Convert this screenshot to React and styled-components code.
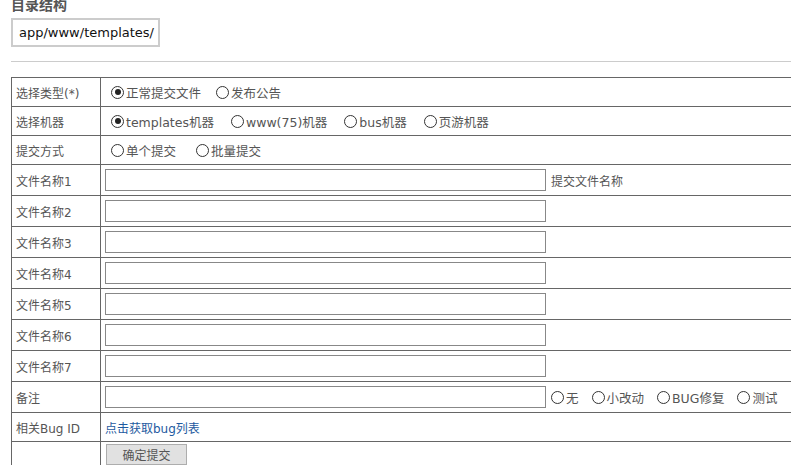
import React, { useState } from 'react';
import styled, { createGlobalStyle } from 'styled-components';

const GlobalStyle = createGlobalStyle`
    html, body {
        margin: 0;
        padding: 0;
        overflow: hidden;
        background: #fff;
    }
    body {
        font-family: "DejaVu Sans", "Noto Sans CJK SC", sans-serif;
        font-size: 12px;
        color: #444;
    }
`;

const fileRows = [1, 2, 3, 4, 5, 6, 7];

const Radio = ({ checked, label, onSelect }) => (
    <Option onClick={onSelect}>
        <Circle checked={checked} />
        <span>{label}</span>
    </Option>
);

const RadioGroup = ({ options, value, onChange, gap, indent }) => (
    <Group gap={gap} indent={indent}>
        {options.map(opt => (
            <Radio key={opt} label={opt} checked={value === opt} onSelect={() => onChange(opt)} />
        ))}
    </Group>
);

const App = () => {
    const [type, setType] = useState('正常提交文件');
    const [machine, setMachine] = useState('templates机器');
    const [mode, setMode] = useState('');
    const [note, setNote] = useState('');

    return(
        <Page>
            <GlobalStyle />
            <Title>目录结构</Title>
            <DirBox>app/www/templates/</DirBox>
            <Divider />
            <Table>
                <tbody>
                    <Row>
                        <Label>选择类型(*)</Label>
                        <Cell>
                            <RadioGroup options={['正常提交文件', '发布公告']} value={type} onChange={setType} gap={15} indent={6} />
                        </Cell>
                    </Row>
                    <Row>
                        <Label>选择机器</Label>
                        <Cell>
                            <RadioGroup options={['templates机器', 'www(75)机器', 'bus机器', '页游机器']} value={machine} onChange={setMachine} gap={17} indent={6} />
                        </Cell>
                    </Row>
                    <Row>
                        <Label>提交方式</Label>
                        <Cell>
                            <RadioGroup options={['单个提交', '批量提交']} value={mode} onChange={setMode} gap={20} indent={6} />
                        </Cell>
                    </Row>
                    {fileRows.map(n => (
                        <Row key={n} tall>
                            <Label>文件名称{n}</Label>
                            <Cell>
                                <Line>
                                    <TextInput />
                                    {n === 1 && <Hint>提交文件名称</Hint>}
                                </Line>
                            </Cell>
                        </Row>
                    ))}
                    <Row tall>
                        <Label>备注</Label>
                        <Cell>
                            <Line>
                                <TextInput />
                                <RadioGroup options={['无', '小改动', 'BUG修复', '测试']} value={note} onChange={setNote} gap={13} indent={0} />
                            </Line>
                        </Cell>
                    </Row>
                    <Row>
                        <Label>相关Bug ID</Label>
                        <Cell>
                            <Link href="#">点击获取bug列表</Link>
                        </Cell>
                    </Row>
                    <Row>
                        <Label />
                        <Cell top>
                            <Submit>确定提交</Submit>
                        </Cell>
                    </Row>
                </tbody>
            </Table>
        </Page>
    );
}

const Page = styled.div`
    padding-left: 11px;
    width: 820px;
`;

const Title = styled.div`
    margin-top: -4px;
    font-size: 14px;
    line-height: 16px;
    font-weight: bold;
    color: #555;
    font-family: "Noto Sans CJK SC", sans-serif;
`;

const DirBox = styled.div`
    margin-top: 6px;
    width: 139px;
    height: 25px;
    border: 2px solid #ccc;
    font-size: 13px;
    line-height: 25px;
    color: #111;
    padding-left: 6px;
`;

const Divider = styled.div`
    margin-top: 14px;
    border-top: 1px solid #ccc;
`;

const Table = styled.table`
    margin-top: 15px;
    width: 800px;
    border-collapse: collapse;
    table-layout: fixed;
`;

const Row = styled.tr`
    height: ${props => props.tall ? '31px' : '29px'};
`;

const Label = styled.td`
    width: 84px;
    padding: 0 0 0 4px;
    border: 1px solid #666;
    white-space: nowrap;
    color: #555;
`;

const Cell = styled.td`
    padding: ${props => props.top ? '2px 0 0 4px' : '0 0 0 4px'};
    vertical-align: ${props => props.top ? 'top' : 'middle'};
    border: 1px solid #666;
    white-space: nowrap;
`;

const Group = styled.div`
    display: flex;
    align-items: center;
    gap: ${props => props.gap}px;
    padding-left: ${props => props.indent}px;
`;

const Option = styled.label`
    display: inline-flex;
    align-items: center;
    gap: 2px;
    cursor: pointer;
    color: #555;
    font-size: 12.5px;
`;

const Circle = styled.span`
    position: relative;
    width: 11px;
    height: 11px;
    border: 1px solid #333;
    border-radius: 50%;
    background: #fff;
    &::after {
        content: '';
        display: ${props => props.checked ? 'block' : 'none'};
        position: absolute;
        left: 2.5px;
        top: 2.5px;
        width: 6px;
        height: 6px;
        border-radius: 50%;
        background: #222;
    }
`;

const Line = styled.div`
    display: flex;
    align-items: center;
    gap: 5px;
`;

const TextInput = styled.input`
    padding: 0 2px;
    border: 1px solid #888;
    box-sizing: border-box;
    height: 22px;
    width: 441px;
    font-size: 12px;
`;

const Hint = styled.span`
    color: #555;
`;

const Link = styled.a`
    color: #1e5aa0;
    text-decoration: none;
`;

const Submit = styled.button`
    margin: 0 0 0 1px;
    width: 81px;
    height: 21px;
    background: #e1e1e1;
    border: 1px solid #adadad;
    color: #555;
    font-family: "Noto Sans CJK SC", sans-serif;
    font-size: 12px;
    padding: 0;
`;

export default App;
